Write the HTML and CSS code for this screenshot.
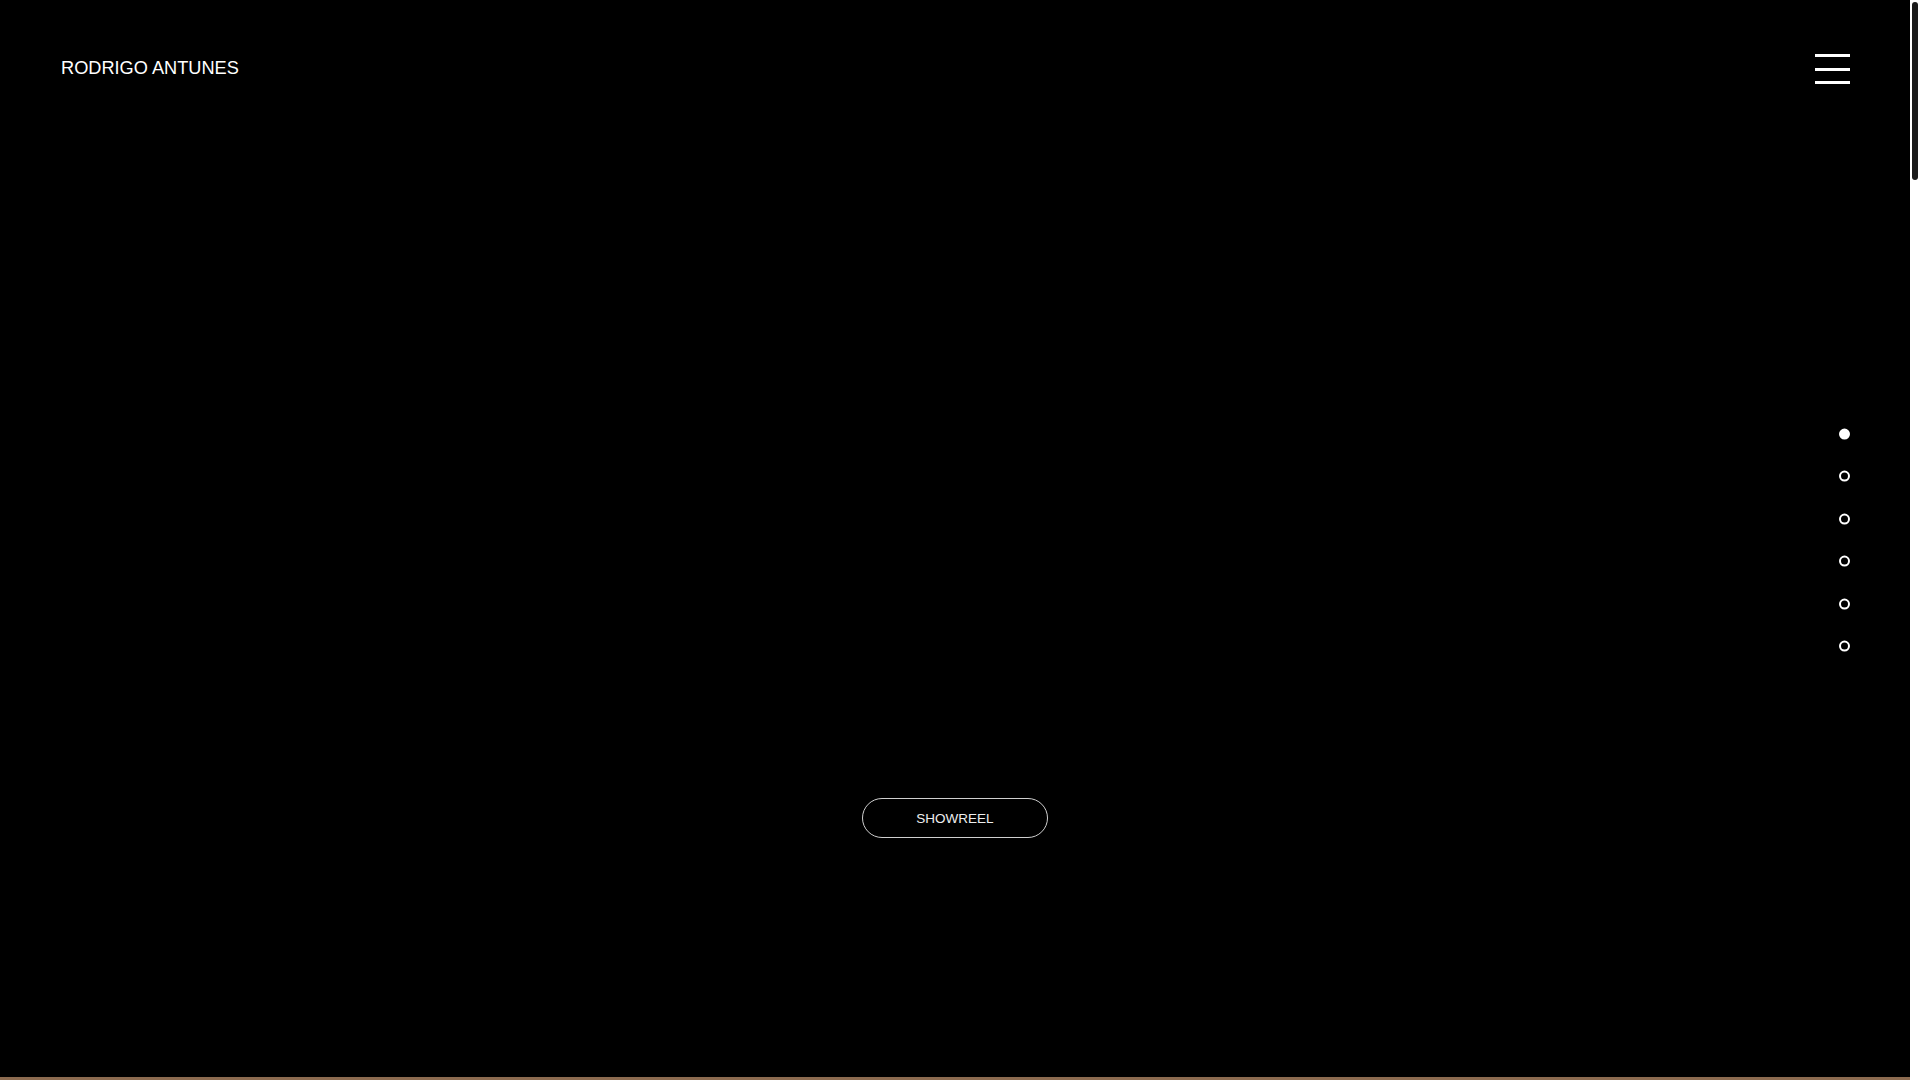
FILE: index.html
```html
<!DOCTYPE html>
<html lang="en">
<head>
<meta charset="utf-8">
<title>Rodrigo Antunes</title>
<link rel="stylesheet" href="styles.css">
</head>
<body>
<div class="frame">
  <div class="page">
    <header class="header">
      <a class="logo" href="#">RODRIGO ANTUNES</a>
      <button class="burger" aria-label="Menu">
        <span class="burger-line"></span>
        <span class="burger-line"></span>
        <span class="burger-line"></span>
      </button>
    </header>

    <main class="hero">
      <a class="showreel" href="#">SHOWREEL</a>
    </main>

    <div class="progress"></div>

    <nav class="dots">
      <span class="dot dot-active"></span>
      <span class="dot"></span>
      <span class="dot"></span>
      <span class="dot"></span>
      <span class="dot"></span>
      <span class="dot"></span>
    </nav>
  </div>
  <div class="scrollbar">
    <div class="scrollbar-thumb"></div>
  </div>
</div>
</body>
</html>
```

FILE: styles.css
```css
html, body {
  margin: 0;
  padding: 0;
  background: #000;
  overflow: hidden;
}

body {
  font-family: "Liberation Sans", Arial, sans-serif;
  color: #fff;
}

.frame {
  display: flex;
  height: 100vh;
}

.page {
  position: relative;
  flex: 1;
  display: flex;
  flex-direction: column;
  background: #000;
}

.header {
  display: flex;
  justify-content: space-between;
  align-items: center;
  padding: 54px 60px 0 61px;
}

.logo {
  font-size: 18.2px;
  line-height: 30px;
  color: #fff;
  text-decoration: none;
  margin-top: -2px;
}

.burger {
  display: flex;
  flex-direction: column;
  gap: 10.5px;
  width: 35px;
  padding: 0;
  border: 0;
  background: transparent;
  cursor: pointer;
}

.burger-line {
  display: block;
  height: 3px;
  background: #fff;
}

.hero {
  flex: 1;
  display: flex;
  flex-direction: column;
  justify-content: flex-end;
  align-items: center;
  padding-bottom: 239px;
}

.showreel {
  display: flex;
  align-items: center;
  justify-content: center;
  width: 186px;
  height: 40px;
  box-sizing: border-box;
  border: 1px solid #d0d0d0;
  border-radius: 20px;
  font-size: 13.5px;
  color: #eee;
  text-decoration: none;
}

.progress {
  height: 3px;
  background: #8c6b50;
}

.dots {
  position: absolute;
  right: 60px;
  top: 50%;
  transform: translateY(-50%);
  display: flex;
  flex-direction: column;
  gap: 31.4px;
}

.dot {
  display: block;
  width: 11px;
  height: 11px;
  box-sizing: border-box;
  border: 2px solid #fff;
  border-radius: 50%;
}

.dot-active {
  background: #fff;
}

.scrollbar {
  width: 10px;
  background: #fff;
  padding: 2px 2px 0;
  box-sizing: border-box;
}

.scrollbar-thumb {
  height: 178px;
  background: #1a1a1a;
  border-radius: 4px;
}
```
